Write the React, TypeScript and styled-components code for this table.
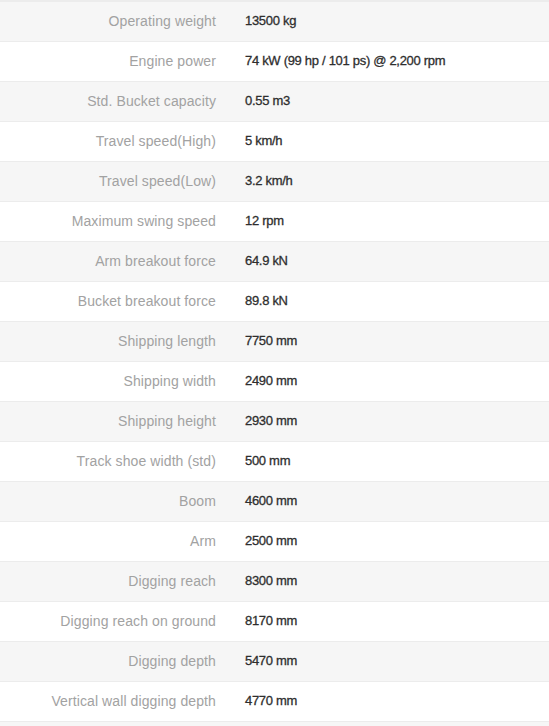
import styled, { createGlobalStyle } from 'styled-components';

const GlobalStyle = createGlobalStyle`
  html, body {
    margin: 0;
    padding: 0;
    background: #fff;
    font-family: "Liberation Sans", Arial, sans-serif;
  }
`;

const specs: [string, string][] = [
  ['Operating weight', '13500 kg'],
  ['Engine power', '74 kW (99 hp / 101 ps) @ 2,200 rpm'],
  ['Std. Bucket capacity', '0.55 m3'],
  ['Travel speed(High)', '5 km/h'],
  ['Travel speed(Low)', '3.2 km/h'],
  ['Maximum swing speed', '12 rpm'],
  ['Arm breakout force', '64.9 kN'],
  ['Bucket breakout force', '89.8 kN'],
  ['Shipping length', '7750 mm'],
  ['Shipping width', '2490 mm'],
  ['Shipping height', '2930 mm'],
  ['Track shoe width (std)', '500 mm'],
  ['Boom', '4600 mm'],
  ['Arm', '2500 mm'],
  ['Digging reach', '8300 mm'],
  ['Digging reach on ground', '8170 mm'],
  ['Digging depth', '5470 mm'],
  ['Vertical wall digging depth', '4770 mm'],
  ['', ''],
];

const Table = styled.div`
  border-top: 1px solid #ececec;
  display: flex;
  flex-direction: column;
`;

const Row = styled.div<{ $striped: boolean }>`
  display: grid;
  grid-template-columns: 231px 1fr;
  align-items: center;
  height: 40px;
  padding-bottom: 2px;
  box-sizing: border-box;
  border-top: 1px solid #ececec;
  background: ${(p) => (p.$striped ? '#f6f6f6' : '#fff')};
`;

const Label = styled.div`
  text-align: right;
  padding-right: 15px;
  font-size: 14px;
  letter-spacing: 0.1px;
  color: #a2a2a2;
  white-space: nowrap;
`;

const Value = styled.div`
  padding-left: 14px;
  font-size: 13px;
  letter-spacing: -0.3px;
  color: #2e2e2e;
  -webkit-text-stroke: 0.3px #2e2e2e;
  white-space: nowrap;
`;

export default function App() {
  return (
    <>
      <GlobalStyle />
      <Table>
        {specs.map(([label, value], i) => (
          <Row key={i} $striped={i % 2 === 0}>
            <Label>{label}</Label>
            <Value>{value}</Value>
          </Row>
        ))}
      </Table>
    </>
  );
}
